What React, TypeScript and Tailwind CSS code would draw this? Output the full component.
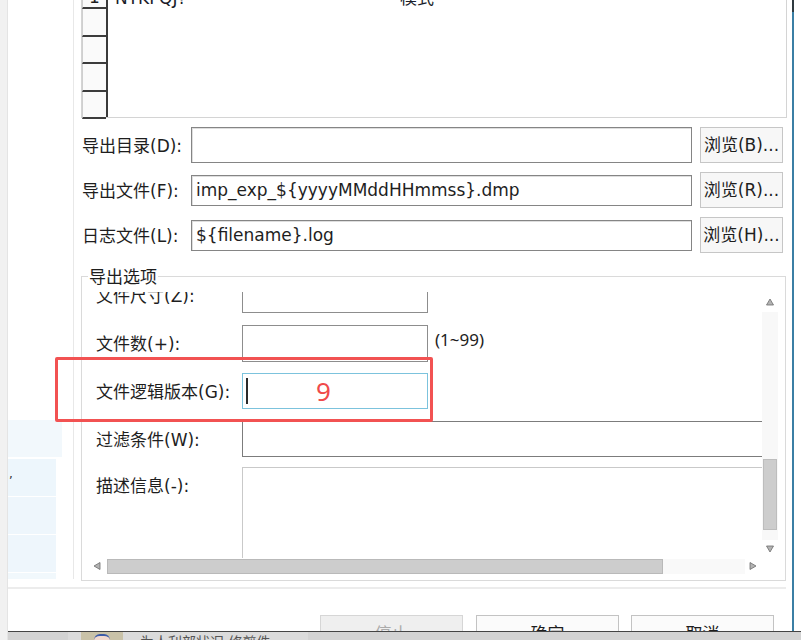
import React from "react";

type Dir = "up" | "down" | "left" | "right";

function Tri({ dir }: { dir: Dir }) {
  const pts =
    dir === "up"
      ? "4,1 7.5,7 0.5,7"
      : dir === "down"
      ? "0.5,1 7.5,1 4,7"
      : dir === "left"
      ? "1,4 7,0.5 7,7.5"
      : "1,0.5 7,4 1,7.5";
  return (
    <svg width="8" height="8" viewBox="0 0 8 8" className="block shrink-0">
      <polygon points={pts} fill="#b3b3b3" stroke="#6c6c6c" strokeWidth="0.8" strokeLinejoin="round" />
    </svg>
  );
}

function Browse({ label }: { label: string }) {
  return (
    <div className="ml-[8px] w-[83px] h-[36px] shrink-0 flex items-center justify-center pt-[2px] bg-[#f7f7f7] border border-[#c6c6c6] text-[17px] text-[#1e1e1e]">
      {label}
    </div>
  );
}

function PathRow({
  label,
  value,
  btn,
  inputH,
}: {
  label: string;
  value: string;
  btn: string;
  inputH: string;
}) {
  return (
    <div className="flex items-center h-[36px]">
      <span className="w-[109px] shrink-0 pt-[3px] text-[17px] text-[#1e1e1e]">{label}</span>
      <div
        className={`w-[501px] ${inputH} shrink-0 flex items-center pl-[4px] pt-[1px] bg-white border border-[#858585] shadow-[inset_1px_1px_0_#dedede] text-[17px] text-[#1e1e1e]`}
      >
        {value}
      </div>
      <Browse label={btn} />
    </div>
  );
}

function OptRow({
  label,
  children,
  className,
}: {
  label: string;
  children: React.ReactNode;
  className: string;
}) {
  return (
    <div className={`flex ${className}`}>
      <div className="w-[160px] h-[36px] shrink-0 pl-[14px] pt-[3px] flex items-center text-[17px] text-[#1e1e1e]">
        {label}
      </div>
      {children}
    </div>
  );
}

export default function App() {
  const rowHeights = ["h-[27px]", "h-[28px]", "h-[27px]", "h-[28px]", "h-[27px]"];
  return (
    <div className="relative w-[801px] h-[640px] overflow-hidden bg-white flex font-['DejaVu_Sans','Noto_Sans_CJK_SC',sans-serif]">
      {/* desktop edge */}
      <div className="w-[8px] shrink-0 bg-[#f1f1f1] border-r border-[#e4e4e4]" />

      {/* dialog body */}
      <div className="w-[784px] shrink-0 flex flex-col">
        <div className="flex h-[579px] shrink-0">
          {/* side list */}
          <div className="w-[66px] shrink-0 border-r border-[#e8e8e8] flex flex-col">
            <div className="h-[420px] shrink-0" />
            <div className="h-[37px] w-[54px] bg-[#f2f8fc]" />
            <div className="mt-[2px] h-[37px] w-[48px] bg-[#edf6fc] relative">
              <span className="absolute left-[1px] top-[9px] text-[12px] text-[#333] leading-none">,</span>
            </div>
            <div className="mt-[1px] h-[37px] w-[48px] bg-[#eef6fc]" />
            <div className="mt-[1px] h-[37px] w-[48px] bg-[#eef6fc]" />
            <div className="mt-[1px] flex-1 w-[48px] bg-[#f1f8fc]" />
          </div>

          {/* main panel */}
          <div className="w-[718px] shrink-0 flex flex-col">
            {/* grid */}
            <div className="ml-[7px] mt-[-19px] w-[706px] h-[137px] shrink-0 border border-[#d4d4d4] flex bg-white">
              <div className="w-[26px] shrink-0 flex flex-col border-r-2 border-[#3a3a3a]">
                {rowHeights.map((h, i) => (
                  <div
                    key={i}
                    className={`${h} shrink-0 border-b-2 border-[#3c3c3c] border-l border-l-[#cfcfcf] bg-[#fafafa] flex items-center justify-center pt-[6px] text-[17px] text-[#1e1e1e]`}
                  >
                    {i === 0 ? "1" : ""}
                  </div>
                ))}
              </div>
              <div className="flex-1">
                <div className="h-[27px] flex items-center pt-[7px] text-[17px] text-[#1a1d2a]">
                  <span className="ml-[7px] w-[285px]">NTKFQJ?</span>
                  <span>模式</span>
                </div>
              </div>
            </div>

            {/* paths */}
            <div className="mt-[9px] ml-[8px] flex flex-col gap-[9px]">
              <PathRow label="导出目录(D):" value="" btn="浏览(B)..." inputH="h-[36px]" />
              <PathRow
                label="导出文件(F):"
                value="imp_exp_${yyyyMMddHHmmss}.dmp"
                btn="浏览(R)..."
                inputH="h-[31px]"
              />
              <PathRow label="日志文件(L):" value="${filename}.log" btn="浏览(H)..." inputH="h-[31px]" />
            </div>

            {/* options group */}
            <div className="relative mt-[23px] ml-[7px] w-[705px] h-[305px] shrink-0 border border-[#dadada] pt-[15px] pb-[6px] pr-[7px] flex flex-col">
              <span className="absolute left-[6px] top-[-11px] bg-white px-[1px] text-[17px] leading-[22px] text-[#1e1e1e]">
                导出选项
              </span>
              <div className="flex h-[266px] shrink-0">
                <div className="w-[680px] shrink-0 overflow-hidden">
                  <div className="mt-[-15px] flex flex-col">
                    <OptRow label="文件尺寸(Z):" className="">
                      <div className="w-[186px] h-[36px] shrink-0 border border-[#8d8d8d] bg-white" />
                    </OptRow>
                    <OptRow label="文件数(+):" className="mt-[12px]">
                      <div className="w-[186px] h-[37px] shrink-0 border border-[#8d8d8d] bg-white" />
                      <span className="ml-[7px] h-[30px] flex items-center font-['Noto_Sans',sans-serif] text-[17px] text-[#1e1e1e]">
                        (1~99)
                      </span>
                    </OptRow>
                    <OptRow label="文件逻辑版本(G):" className="mt-[11px]">
                      <div className="w-[186px] h-[36px] shrink-0 border border-[#7cc3dd] bg-white flex items-center">
                        <span className="ml-[3px] w-[2px] h-[26px] bg-[#2a2a2a]" />
                        <span className="ml-[68px] font-['Noto_Sans',sans-serif] text-[26px] leading-none text-[#f04a4a]">
                          9
                        </span>
                      </div>
                    </OptRow>
                    <OptRow label="过滤条件(W):" className="mt-[12px]">
                      <div className="w-[524px] h-[36px] shrink-0 border border-[#7c7c7c] bg-white" />
                    </OptRow>
                    <OptRow label="描述信息(-):" className="mt-[10px]">
                      <div className="w-[524px] h-[110px] shrink-0 border border-[#c9c9c9] bg-white" />
                    </OptRow>
                  </div>
                </div>
                {/* vertical scrollbar */}
                <div className="w-[16px] shrink-0 flex flex-col">
                  <div className="h-[20px] shrink-0 flex items-center justify-center">
                    <Tri dir="up" />
                  </div>
                  <div className="flex-1 bg-[#f8f8f8] flex flex-col items-center">
                    <div className="mt-[147px] w-[14px] h-[71px] bg-[#cdcdcd] border border-[#bdbdbd]" />
                  </div>
                  <div className="h-[18px] shrink-0 flex items-center justify-center bg-white">
                    <Tri dir="down" />
                  </div>
                </div>
              </div>
              {/* horizontal scrollbar */}
              <div className="flex h-[16px] shrink-0">
                <div className="w-[680px] shrink-0 flex items-center">
                  <div className="w-[25px] shrink-0 flex items-center pl-[11px]">
                    <Tri dir="left" />
                  </div>
                  <div className="w-[556px] h-[15px] shrink-0 bg-[#cdcdcd] border border-[#b9b9b9]" />
                  <div className="w-[82px] h-[15px] shrink-0 bg-[#f9f9f9]" />
                  <div className="flex-1 flex items-center pl-[4px]">
                    <Tri dir="right" />
                  </div>
                </div>
                <div className="w-[16px] shrink-0" />
              </div>
            </div>
          </div>
        </div>

        {/* footer */}
        <div className="mt-[8px] h-[2px] mr-[6px] bg-[#ececec] shrink-0" />
        <div className="pt-[26px] pl-[312px] flex gap-[12px]">
          <div className="w-[143px] h-[36px] shrink-0 flex items-center justify-center pt-[3px] bg-[#efefef] border border-[#d6d6d6] text-[17px] text-[#ababab]">
            停止
          </div>
          <div className="ml-[1px] w-[143px] h-[36px] shrink-0 flex items-center justify-center pt-[3px] bg-[#fbfbfb] border border-[#c3c3c3] text-[17px] text-[#1e1e1e]">
            确定
          </div>
          <div className="w-[143px] h-[36px] shrink-0 flex items-center justify-center pt-[3px] bg-[#fbfbfb] border border-[#c3c3c3] text-[17px] text-[#1e1e1e]">
            取消
          </div>
        </div>
      </div>

      {/* window frame edge */}
      <div className="w-[2px] shrink-0 flex flex-col">
        <div className="h-[12px] bg-[#2f3a40]" />
        <div className="flex-1 bg-[#3b7fa5]" />
      </div>
      <div className="flex-1 bg-white" />

      {/* taskbar peeking in below */}
      <div className="absolute left-[8px] right-0 top-[631px] h-[9px] bg-[#d3d3d3] border-t border-[#444] flex">
        <div className="ml-[60px] w-[240px] h-full bg-[#dbdbdb] flex overflow-hidden">
          <div className="ml-[13px] w-[42px] h-full bg-[#c9c2a8] flex items-start justify-center">
            <div className="mt-[2px] w-[16px] h-[6px] rounded-t-full bg-[#f1d9cf] border-t-2 border-[#3d5ca8]" />
          </div>
          <span className="ml-[17px] mt-[3px] text-[14px] leading-[14px] text-[#555]">为人利部状况 修剪件</span>
        </div>
      </div>

      {/* highlight around the version field */}
      <div className="absolute left-[55px] top-[357px] w-[378px] h-[65px] border-[3px] border-[#f25252] rounded-[2px]" />
    </div>
  );
}
